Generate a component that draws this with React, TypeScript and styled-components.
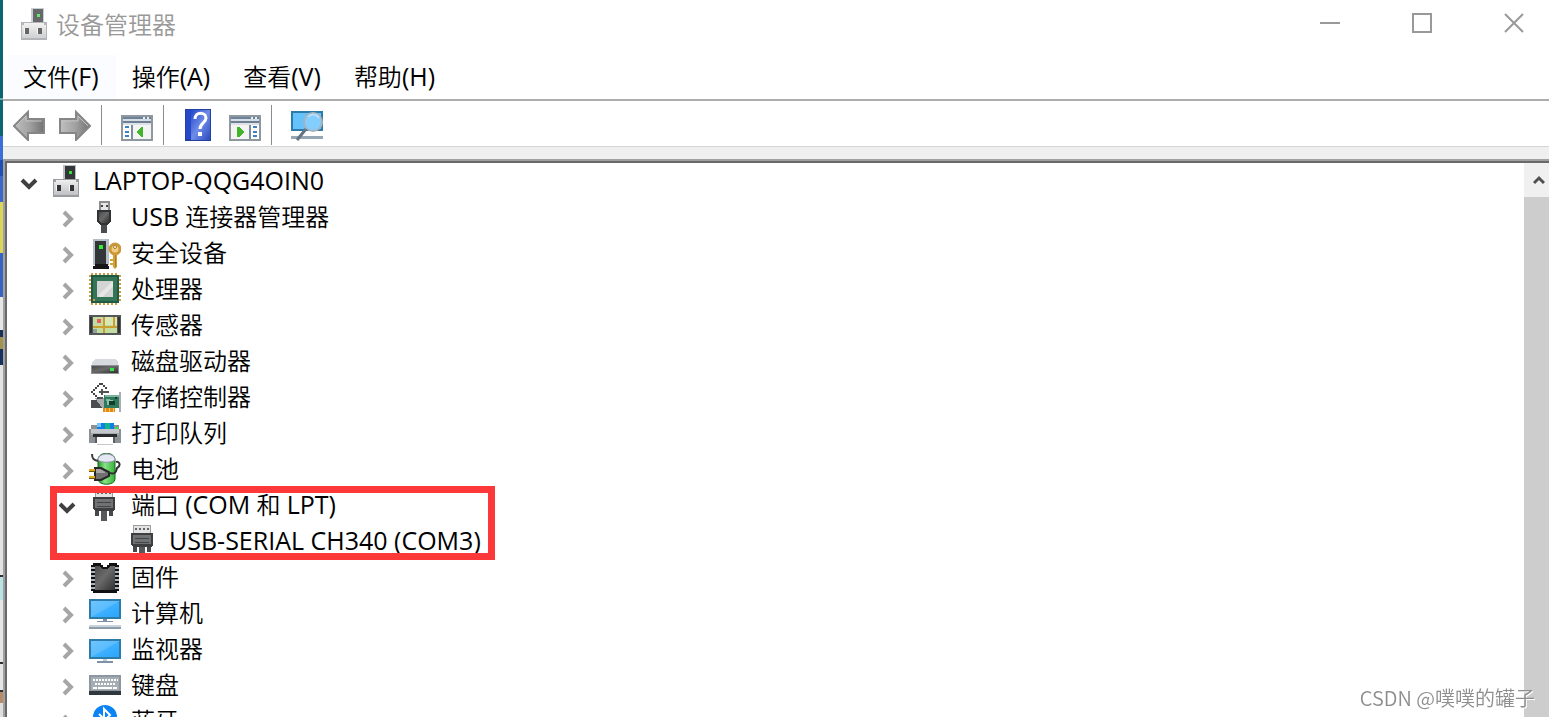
import React from "react";
import styled, { createGlobalStyle } from "styled-components";

const GlobalStyle = createGlobalStyle`
  *, *::before, *::after { box-sizing: border-box; }
  body {
    margin: 0;
    overflow: hidden;
    background: #ffffff;
    color: #000000;
    font-family: "Open Sans", "Noto Sans CJK SC", sans-serif;
    font-size: 24px;
    line-height: 36px;
    font-weight: 350;
  }
  button { font: inherit; color: inherit; border: 0; padding: 0; background: none; }
  ul { list-style: none; margin: 0; padding: 0; }
  svg { display: block; flex: none; }
`;

const Screen = styled.div`
  display: flex;
  height: 100vh;
  overflow: hidden;
`;

const DesktopEdge = styled.div`
  flex: none;
  width: 3px;
  background: linear-gradient(
    to bottom,
    #0a6672 0 98px, #6fa9ae 98px 100px, #0a6672 100px 136px,
    #3c6fd6 136px 160px, #1f4fb4 160px 176px, #3c68cc 176px 202px,
    #dbd65a 202px 253px, #3564c4 253px 297px,
    #e6e6e6 297px 330px, #17305c 330px 337px, #a3924c 337px 349px,
    #17305c 349px 365px, #e2e4e4 365px 575px, #303030 575px 577px,
    #b8e4e6 577px 600px, #e6e6e6 600px 662px, #303030 662px 664px,
    #e6e6e6 664px 690px, #303030 690px 692px, #b98a66 692px 703px, #dedede 703px
  );
`;

const Window = styled.main`
  flex: 1;
  min-width: 0;
  display: flex;
  flex-direction: column;
`;

const TitleBar = styled.header`
  display: flex;
  align-items: flex-start;
  height: 55px;
  padding-left: 16px;
  color: #999999;
`;

const TitleIcon = styled.span`
  margin-top: 8px;
  opacity: 0.75;
`;

const Title = styled.h1`
  flex: 1;
  margin: 7px 0 0 5px;
  font-size: 24px;
  line-height: 36px;
  font-weight: 350;
`;

const WindowControls = styled.div`
  display: flex;
  gap: 22px;
`;

const ControlButton = styled.button`
  display: grid;
  place-items: center;
  width: 70px;
  height: 46px;
`;

const MenuBar = styled.nav`
  display: flex;
  padding-left: 4px;
  border-bottom: 2px solid #adadad;
`;

const MenuButton = styled.button<{ $active?: boolean }>`
  height: 44px;
  padding: 0 17px 0 16px;
  background: ${(p) => (p.$active ? "#fafcff" : "transparent")};
`;

const LatinRun = styled.span`
  font-size: 25px;
  line-height: 1;
  font-weight: 400;
`;

const Toolbar = styled.div`
  display: flex;
  align-items: center;
  height: 46px;
  padding: 3px 0 0 3px;
  border-bottom: 1px solid #d5d5d5;
`;

const ToolButton = styled.button`
  display: grid;
  place-items: center;
  width: 46px;
  height: 40px;
`;

const ToolSeparator = styled.span`
  width: 1px;
  height: 40px;
  margin: 0 12px 0 3px;
  background: #8c8c8c;
`;

const Client = styled.section`
  flex: 1;
  min-height: 0;
  display: flex;
  flex-direction: column;
  padding-top: 12px;
  background: #efefef;
`;

const OuterFrame = styled.div`
  flex: 1;
  min-height: 0;
  display: flex;
  border: solid #a0a0a0;
  border-width: 2px 0 0 2px;
`;

const InnerFrame = styled.div`
  flex: 1;
  min-width: 0;
  display: flex;
  border: solid #696969;
  border-width: 2px 0 0 2px;
  background: #ffffff;
`;

const Tree = styled.ul`
  flex: 1;
  min-width: 0;
  overflow: hidden;
`;

const Row = styled.div<{ $level: number }>`
  display: flex;
  align-items: center;
  height: 36px;
  padding-left: ${(p) => 12 + p.$level * 38}px;
  white-space: nowrap;
`;

const Expander = styled.button`
  flex: none;
  display: grid;
  place-items: center;
  width: 20px;
  height: 36px;
  padding-top: 4px;
`;

const ExpanderSpace = styled.span`
  flex: none;
  width: 20px;
`;

const Glyph = styled.span`
  flex: none;
  margin: 0 10px 0 12px;
`;

const Highlighted = styled.li`
  position: relative;
  &::after {
    content: "";
    position: absolute;
    top: -1px;
    bottom: -1px;
    left: 43px;
    width: 445px;
    border: 7px solid #fd3838;
    pointer-events: none;
  }
`;

const ScrollBar = styled.div`
  flex: none;
  display: flex;
  flex-direction: column;
  width: 25px;
  background: #cdcdcd;
`;

const ScrollUp = styled.button`
  display: flex;
  align-items: center;
  justify-content: flex-end;
  height: 34px;
  padding-right: 4px;
  background: #f0f0f0;
`;

const Watermark = styled.p`
  position: fixed;
  right: 14px;
  bottom: 4px;
  margin: 0;
  font-family: "Noto Sans CJK SC", sans-serif;
  font-size: 20px;
  line-height: 30px;
  color: #8e8e8e;
  text-shadow: 1px 1px 0 #ffffff;
`;

const Icon = ({ children, viewBox = "0 0 32 32" }: { children: React.ReactNode; viewBox?: string }) => (
  <svg width="32" height="32" viewBox={viewBox} shapeRendering="crispEdges" aria-hidden="true">
    {children}
  </svg>
);

const Gradients = () => (
  <svg width="0" height="0" style={{ position: "absolute" }} aria-hidden="true">
    <defs>
      <linearGradient id="screen" x1="0" y1="0" x2="1" y2="1">
        <stop offset="0" stopColor="#6cc5ff" />
        <stop offset="0.5" stopColor="#5bbcff" />
        <stop offset="0.52" stopColor="#3eb0ff" />
        <stop offset="1" stopColor="#2ba6fb" />
      </linearGradient>
      <linearGradient id="arrow" x1="0" y1="0" x2="1" y2="0">
        <stop offset="0" stopColor="#c0c0c0" />
        <stop offset="0.5" stopColor="#a2a2a2" />
        <stop offset="1" stopColor="#727272" />
      </linearGradient>
      <linearGradient id="help" x1="0" y1="0" x2="1" y2="1">
        <stop offset="0" stopColor="#2348c8" />
        <stop offset="0.5" stopColor="#6f8ce8" />
        <stop offset="1" stopColor="#2b4bbd" />
      </linearGradient>
      <linearGradient id="metal" x1="0" y1="0" x2="0" y2="1">
        <stop offset="0" stopColor="#eeeeee" />
        <stop offset="1" stopColor="#bfc1c4" />
      </linearGradient>
      <linearGradient id="dark" x1="0" y1="0" x2="1" y2="1">
        <stop offset="0" stopColor="#4a4a4a" />
        <stop offset="0.45" stopColor="#6a6a6a" />
        <stop offset="1" stopColor="#303030" />
      </linearGradient>
      <linearGradient id="cell" x1="0" y1="0" x2="1" y2="0">
        <stop offset="0" stopColor="#1f9426" />
        <stop offset="0.4" stopColor="#8ae386" />
        <stop offset="1" stopColor="#35b03a" />
      </linearGradient>
    </defs>
  </svg>
);

const HostIcon = () => (
  <Icon viewBox="1 0 32 32">
    <path d="M13 0h13v15H13z" fill="#b9c0c8" />
    <path d="M15 1h10v13H15z" fill="#343638" />
    <path d="M19 6h3v3h-3z" fill="#2fe339" />
    <path d="M3 14h26v18H3z" fill="#9a9c9f" />
    <path d="M4 15h24v15H4z" fill="url(#metal)" />
    <path d="M4 15h2v2H4zM26 15h2v2h-2z" fill="#9d9fa2" />
    <path d="M7 20h4v6H7zM20 20h4v6h-4z" fill="#333333" />
    <path d="M6 20h1v6H6zM19 20h1v6h-1z" fill="#f8f8f8" />
  </Icon>
);

const UsbIcon = () => (
  <Icon>
    <path d="M10 0h11v10H10z" fill="#8b8d8f" />
    <path d="M12 2h7v8h-7z" fill="#e6e6e6" />
    <path d="M12 4h2v2h-2zM17 4h2v2h-2z" fill="#444444" />
    <path d="M8 9h14v11l-3 4h-8l-3-4z" fill="#303234" />
    <path d="M10 11h10v9l-2 2h-6l-2-2z" fill="url(#dark)" />
    <path d="M12 24h6v8h-6z" fill="#4b4d4f" />
  </Icon>
);

const SecurityIcon = () => (
  <Icon>
    <path d="M4 2h16v26H4z" fill="#b5bec6" />
    <path d="M6 4h11v23H6z" fill="#333638" />
    <path d="M10 8h4v4h-4z" fill="#33ee33" />
    <path d="M6 27h13v2h1v3H4v-3h2z" fill="#161616" />
    <g shapeRendering="auto">
      <circle cx="26" cy="12" r="5" fill="#f0cf84" stroke="#c99839" strokeWidth="3" />
      <circle cx="26" cy="10" r="1.5" fill="#ffffff" stroke="#a87b26" />
      <path d="M24 17h4v13l-2 2-2-2zM21 22h3v2h-3zM21 26h3v2h-3z" fill="#d6a137" />
      <path d="M26 18h1v12h-1z" fill="#a87b26" />
    </g>
  </Icon>
);

const ProcessorIcon = () => (
  <Icon>
    <path d="M2 1h28M2 31h28M1 2v28M31 2v28" stroke="#cd9b45" strokeWidth="2" strokeDasharray="2 2" />
    <path d="M2 2h28v28H2z" fill="#1f5a43" />
    <path d="M4 4h24v24H4z" fill="#347457" />
    <path d="M8 8h16v16H8z" fill="#d3d5d5" />
    <path d="M10 22L22 9h2v4L13 24h-3z" fill="#e6e6e6" />
    <path d="M4 28h2v-2H4z" fill="#cd9b45" />
  </Icon>
);

const SensorIcon = () => (
  <Icon>
    <path d="M0 6h32v20H0z" fill="#55585a" />
    <path d="M1 8h2v16H1zM29 8h2v16h-2z" fill="#303234" />
    <path d="M4 8h24v16H4z" fill="#c3dda0" />
    <path d="M16 8h12v8H16z" fill="#d8e8b4" />
    <path d="M4 17h24v2H4zM14 8h2v16h-2zM24 8h2v9h-2z" fill="#c99f31" />
    <path d="M8 10h4v4H8z" fill="#e85d5d" />
    <path d="M4 20h4v4H4z" fill="#8ea39a" />
  </Icon>
);

const DiskIcon = () => (
  <Icon>
    <path d="M6 14h20l3 3v4H3v-4z" fill="#d6dade" />
    <path d="M2 20h28v9H2z" fill="#8d9297" />
    <path d="M3 21h26v7H3z" fill="url(#dark)" />
    <path d="M21 23h4v3h-4z" fill="#37e64a" />
  </Icon>
);

const StorageIcon = () => (
  <Icon>
    <path d="M2 19h5l6 4v4H2z" fill="#4a4c4e" />
    <path d="M6 17h8l4 4v6h-5z" fill="#a7abae" />
    <path
      d="M10 2h4v2h2v2h2v2h-2V6h-2V4h-4v2H8v2H6v2H4v2h2v2h2v2h2v2H8v-2H6v-2H4v-2H2v-2h2V8h2V6h2V4h2z"
      fill="#444444"
    />
    <path d="M12 8h2v2h6v2h-6v2h-2v-2h-2v-2h2zM10 16h4v2h-4z" fill="#505254" />
    <path d="M15 14h15v13H15z" fill="#2f7a5c" />
    <path d="M16 14h14v2H16zM17 18h4v2h-4z" fill="#7db49e" />
    <path d="M18 19h6v5h-6z" fill="#8fc0ad" />
    <path d="M20 20h6v4h-6zM26 16h2v2h-2z" fill="#123c2c" />
    <path d="M14 27h12v4H14z" fill="#e08a1c" />
    <path d="M16 27h1v4h-1zM20 27h1v4h-1zM24 27h1v4h-1z" fill="#ffc65c" />
    <path d="M30 11h2v20h-2z" fill="#a9adb1" />
  </Icon>
);

const PrinterIcon = () => (
  <Icon>
    <path d="M0 12h32v14H0zM2 8h28v4H2z" fill="#8c9196" />
    <path d="M2 12h28v4H2z" fill="#c4c8cc" />
    <path d="M2 16h28v2H2z" fill="#a7abb0" />
    <path d="M8 6h17v6H8z" fill="#0f7fe8" />
    <path d="M8 6h4v4H8z" fill="#73c3ff" />
    <path d="M16 6h5v6h-5z" fill="#12b58a" />
    <path d="M26 10h3v2h-3z" fill="#36e536" />
    <path d="M4 17h24v3H4z" fill="#292b2d" />
    <path d="M6 20h20v6H6z" fill="#5b5e61" />
    <path d="M8 20h16v7H8z" fill="#ffffff" />
    <path d="M8 27h16v1H8z" fill="#c9c9c9" />
  </Icon>
);

const BatteryIcon = () => (
  <Icon>
    <g shapeRendering="auto">
      <path d="M9 7c0-9 17-9 17 0v19c0 7-17 7-17 0z" fill="url(#cell)" stroke="#166b1c" />
      <path d="M9 7c0-8 17-8 17 0-3 3-14 3-17 0z" fill="#e5e7f5" stroke="#8d90a8" />
      <path d="M3 1c0 5 2 6 6 7" fill="none" stroke="#3b3b3b" strokeWidth="2" />
      <path d="M20 20c8 2 7-3 8-5 4-2 3-7-1-6" fill="none" stroke="#303030" strokeWidth="2" />
      <path d="M6 15h6l8 4v4l-8 4H6z" fill="#707070" stroke="#262626" strokeWidth="2" />
      <path d="M7 16h4l5 3v1H7z" fill="#a5a5a5" />
    </g>
    <path d="M0 16h6v2H0zM0 23h6v2H0z" fill="#e0ab15" />
    <path d="M0 18h6v1H0zM0 25h6v1H0z" fill="#6c5517" />
  </Icon>
);

const PortIcon = () => (
  <Icon>
    <path d="M6 0h18v8H6z" fill="#9da0a2" />
    <path d="M7 1h16v7H7z" fill="#e3e3e3" />
    <path d="M8 3h2v2H8zM12 3h2v2h-2zM16 3h2v2h-2zM20 3h2v2h-2z" fill="#666666" />
    <path d="M4 8h22v12l-2 2H6l-2-2z" fill="#3c3e40" />
    <path d="M6 10h18v9H6z" fill="#707274" />
    <path d="M8 13h14v1H8zM8 17h14v1H8z" fill="#434547" />
    <path d="M6 22h4v5H6zM20 22h4v5h-4z" fill="#46484a" />
    <path d="M12 22h6v10h-6z" fill="#56585a" />
  </Icon>
);

const FirmwareIcon = () => (
  <Icon>
    <path d="M4 2h8v2h2v2h4V4h2V2h8v30H4z" fill="#111111" />
    <path d="M6 5h5l2 3h6l2-3h5v24H6z" fill="url(#dark)" />
    <path d="M4 6v24M28 6v24" stroke="#a9b5c0" strokeWidth="4" />
    <path d="M4 4v26M28 4v26" stroke="#111111" strokeWidth="4" strokeDasharray="2 2" />
  </Icon>
);

const ComputerIcon = () => (
  <Icon>
    <path d="M0 2h32v20H0z" fill="#2d7ba8" />
    <path d="M2 4h28v16H2z" fill="url(#screen)" />
    <path d="M14 22h4v2h-4zM8 24h16v1H8z" fill="#7d93a5" />
    <path d="M0 28h32v2H0z" fill="#c8d3dc" />
    <path d="M0 30h32v2H0z" fill="#8b9cab" />
  </Icon>
);

const MonitorIcon = () => (
  <Icon>
    <path d="M0 6h32v20H0z" fill="#2d7ba8" />
    <path d="M2 8h28v16H2z" fill="url(#screen)" />
    <path d="M14 26h4v2h-4z" fill="#c0ccd4" />
    <path d="M8 28h16v2H8z" fill="#7d93a5" />
  </Icon>
);

const KeyboardIcon = () => (
  <Icon>
    <path d="M0 6h32v17H0z" fill="#8e979f" />
    <path d="M2 8h28v13H2z" fill="#a6aeb5" />
    <path d="M4 11h25M6 15h21" stroke="#ffffff" strokeWidth="2" strokeDasharray="2 1" />
    <path d="M4 19h4M9 19h14M24 19h4" stroke="#ffffff" strokeWidth="2" />
    <path d="M0 22h32v4H0z" fill="#30383f" />
  </Icon>
);

const BluetoothIcon = () => (
  <Icon>
    <g shapeRendering="auto">
      <path d="M4 12a12 12 0 0 1 24 0v8a12 12 0 0 1-24 0z" fill="#0a84f5" />
      <path d="M10 9l11 11-6 6V4l6 6-11 11" fill="none" stroke="#ffffff" strokeWidth="2" />
    </g>
  </Icon>
);

const ArrowIcon = ({ forward }: { forward?: boolean }) => (
  <svg width="32" height="32" viewBox="0 0 32 32" aria-hidden="true">
    <path
      d={forward ? "M31 17L17 31v-7H1V10h16V3z" : "M1 17L15 31v-7h16V10H15V3z"}
      fill="url(#arrow)"
      stroke="#868686"
      strokeWidth="2"
    />
    <path
      d={forward ? "M3 12h16V7l10 10" : "M29 12H13V7L3 17"}
      fill="none"
      stroke="#c4c4c4"
      strokeWidth="1"
    />
  </svg>
);

const PaneIcon = ({ right }: { right?: boolean }) => (
  <Icon>
    <path d="M0 6h32v26H0z" fill="#8f989f" />
    <path d="M2 8h28v2H2z" fill="#6e819a" />
    <path d="M2 10h28v2H2z" fill="#d5dde5" />
    <path d="M22 8h2v2h-2zM26 8h2v2h-2z" fill="#e8eef4" />
    <path d="M2 12h28v2H2z" fill="#6e7f94" />
    <path d="M2 14h28v2H2z" fill="#dce2e8" />
    <path d="M2 16h28v14H2z" fill="#f4f4f4" />
    {right ? (
      <>
        <path d="M20 16h2v14h-2z" fill="#7d8da0" />
        <path d="M22 16h8v14h-8z" fill="#ffffff" />
        <path d="M24 18h4M24 23h4M24 27h4" stroke="#3d80c5" strokeWidth="2" />
        <path d="M8 18h2l5 5-5 5H8z" fill="#42b52d" />
      </>
    ) : (
      <>
        <path d="M2 16h8v14H2z" fill="#ffffff" />
        <path d="M10 16h2v14h-2z" fill="#7d8da0" />
        <path d="M4 18h4M4 23h4M4 27h4" stroke="#3d80c5" strokeWidth="2" />
        <path d="M22 18h-2l-4 5 4 5h2z" fill="#42b52d" />
      </>
    )}
  </Icon>
);

const HelpIcon = () => (
  <svg width="32" height="32" viewBox="1 0 32 32" aria-hidden="true">
    <path d="M3 0h26v32H3z" fill="#23409f" />
    <path d="M9 1h19v30H9z" fill="url(#help)" />
    <path d="M4 1h5v29H4z" fill="#2549c9" />
    <path
      d="M13 10c0-8 11-7 11-1 0 5-6 5-6 11"
      fill="none"
      stroke="#ffffff"
      strokeWidth="3"
    />
    <path d="M16 23h4v4h-4z" fill="#ffffff" />
  </svg>
);

const ScanIcon = () => (
  <svg width="32" height="32" viewBox="0 0 32 32" aria-hidden="true">
    <path d="M0 2h32v20H0z" fill="#2d7ba8" />
    <path d="M2 4h28v16H2z" fill="#66c2fb" />
    <path d="M0 27h32v3H0z" fill="#95a6b5" />
    <circle cx="22" cy="13" r="9" fill="#84cdff" stroke="#a4b4bf" strokeWidth="2" />
    <path d="M17 8c3-4 9-3 11 1" fill="none" stroke="#b5e1ff" strokeWidth="2" />
    <path d="M15 20L6 31" stroke="#657480" strokeWidth="3" />
  </svg>
);

const Chevron = ({ open }: { open?: boolean }) =>
  open ? (
    <svg width="18" height="18" viewBox="0 0 18 18" aria-hidden="true">
      <path d="M2 6l7 7 7-7" fill="none" stroke="#404040" strokeWidth="4" />
    </svg>
  ) : (
    <svg width="18" height="18" viewBox="0 0 18 18" aria-hidden="true">
      <path d="M6 2l7 7-7 7" fill="none" stroke="#a6a6a6" strokeWidth="4" />
    </svg>
  );

type Device = { label: string; icon: React.ComponentType };

const beforePorts: Device[] = [
  { label: "USB 连接器管理器", icon: UsbIcon },
  { label: "安全设备", icon: SecurityIcon },
  { label: "处理器", icon: ProcessorIcon },
  { label: "传感器", icon: SensorIcon },
  { label: "磁盘驱动器", icon: DiskIcon },
  { label: "存储控制器", icon: StorageIcon },
  { label: "打印队列", icon: PrinterIcon },
  { label: "电池", icon: BatteryIcon },
];

const afterPorts: Device[] = [
  { label: "固件", icon: FirmwareIcon },
  { label: "计算机", icon: ComputerIcon },
  { label: "监视器", icon: MonitorIcon },
  { label: "键盘", icon: KeyboardIcon },
  { label: "蓝牙", icon: BluetoothIcon },
];

const menus = ["文件(F)", "操作(A)", "查看(V)", "帮助(H)"];

/* Latin letters are set one size larger than the Chinese characters beside them. */
const MixedText = ({ children }: { children: string }) => (
  <span>
    {children.split(/([!-~]+(?: [!-~]+)*)/).map((run, i) =>
      i % 2 ? <LatinRun key={i}>{run}</LatinRun> : run
    )}
  </span>
);

const DeviceRow = ({
  label,
  icon: DeviceIcon,
  level = 1,
  open,
  leaf,
}: Device & { level?: number; open?: boolean; leaf?: boolean }) => (
  <Row $level={level}>
    {leaf ? (
      <ExpanderSpace />
    ) : (
      <Expander type="button" aria-label={label} aria-expanded={!!open}>
        <Chevron open={open} />
      </Expander>
    )}
    <Glyph>
      <DeviceIcon />
    </Glyph>
    <MixedText>{label}</MixedText>
  </Row>
);

export default function App() {
  return (
    <Screen>
      <GlobalStyle />
      <Gradients />
      <DesktopEdge />
      <Window>
        <TitleBar>
          <TitleIcon>
            <HostIcon />
          </TitleIcon>
          <Title>设备管理器</Title>
          <WindowControls>
            <ControlButton type="button" aria-label="最小化">
              <svg width="20" height="20" viewBox="0 0 20 20">
                <path d="M0 9h20v2H0z" fill="#999999" />
              </svg>
            </ControlButton>
            <ControlButton type="button" aria-label="最大化">
              <svg width="20" height="20" viewBox="0 0 20 20">
                <path d="M1 1h18v18H1z" fill="none" stroke="#999999" strokeWidth="2" />
              </svg>
            </ControlButton>
            <ControlButton type="button" aria-label="关闭">
              <svg width="20" height="20" viewBox="0 0 20 20">
                <path d="M1 1l18 18M19 1L1 19" stroke="#999999" strokeWidth="2" />
              </svg>
            </ControlButton>
          </WindowControls>
        </TitleBar>
        <MenuBar>
          {menus.map((menu, i) => (
            <MenuButton key={menu} type="button" $active={i === 0}>
              <MixedText>{menu}</MixedText>
            </MenuButton>
          ))}
        </MenuBar>
        <Toolbar role="toolbar">
          <ToolButton type="button" aria-label="后退"><ArrowIcon /></ToolButton>
          <ToolButton type="button" aria-label="前进"><ArrowIcon forward /></ToolButton>
          <ToolSeparator />
          <ToolButton type="button" aria-label="显示控制台树"><PaneIcon /></ToolButton>
          <ToolSeparator />
          <ToolButton type="button" aria-label="帮助"><HelpIcon /></ToolButton>
          <ToolButton type="button" aria-label="显示操作窗格"><PaneIcon right /></ToolButton>
          <ToolSeparator />
          <ToolButton type="button" aria-label="扫描检测硬件改动"><ScanIcon /></ToolButton>
        </Toolbar>
        <Client>
          <OuterFrame>
            <InnerFrame>
              <Tree>
                <li>
                  <DeviceRow label="LAPTOP-QQG4OIN0" icon={HostIcon} level={0} open />
                  <ul>
                    {beforePorts.map((d) => (
                      <li key={d.label}>
                        <DeviceRow {...d} />
                      </li>
                    ))}
                    <Highlighted>
                      <DeviceRow label="端口 (COM 和 LPT)" icon={PortIcon} open />
                      <DeviceRow label="USB-SERIAL CH340 (COM3)" icon={PortIcon} level={2} leaf />
                    </Highlighted>
                    {afterPorts.map((d) => (
                      <li key={d.label}>
                        <DeviceRow {...d} />
                      </li>
                    ))}
                  </ul>
                </li>
              </Tree>
              <ScrollBar>
                <ScrollUp type="button" aria-label="向上滚动">
                  <svg width="12" height="10" viewBox="0 0 12 10">
                    <path d="M1 8l5-5 5 5" fill="none" stroke="#505050" strokeWidth="3" />
                  </svg>
                </ScrollUp>
              </ScrollBar>
            </InnerFrame>
          </OuterFrame>
        </Client>
      </Window>
      <Watermark>CSDN @噗噗的罐子</Watermark>
    </Screen>
  );
}
